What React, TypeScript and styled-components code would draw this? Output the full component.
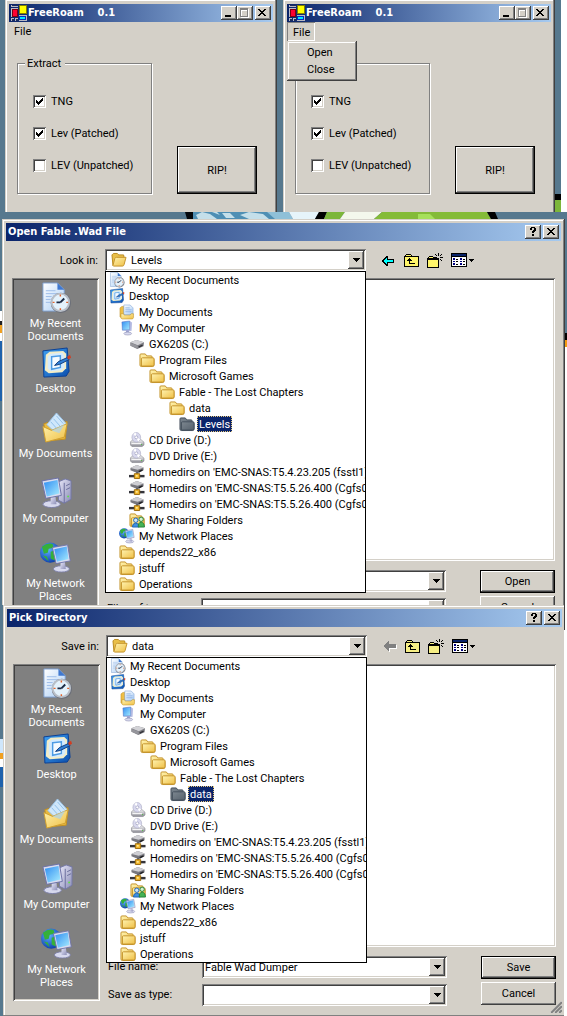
import React, { useId, useState } from "react";
import styled, { createGlobalStyle, css } from "styled-components";

const face = "#d4d0c8";
const shadow = "#808080";
const dark = "#404040";
const navy = "#0a246a";
const steel = "#56788e";

const Global = createGlobalStyle`
  *, *::before, *::after { box-sizing: border-box; }
  body {
    margin: 0;
    background: #ffffff;
    color: #000000;
    font: 11px/13px Roboto, "Liberation Sans", Arial, sans-serif;
  }
  button, input, select { font: inherit; color: inherit; margin: 0; }
  ul { list-style: none; margin: 0; padding: 0; }
`;

const raised = css`
  box-shadow: inset -1px -1px ${dark}, inset 1px 1px #ffffff, inset -2px -2px ${shadow};
`;

const sunken = css`
  box-shadow: inset 1px 1px ${shadow}, inset -1px -1px #ffffff, inset 2px 2px ${dark},
    inset -2px -2px ${face};
`;

/* ---------- icons ---------- */

type IconName =
  | "recent" | "desktop" | "documents" | "documentsBig" | "computer" | "computerBig"
  | "drive" | "folder" | "folderOpen" | "folderDark" | "disc" | "netdrive"
  | "sharing" | "network";

const HiddenDefs = styled.svg`
  display: block;
  width: 0;
  height: 0;
`;

const GradientDefs = () => (
  <HiddenDefs aria-hidden="true">
    <defs>
      <linearGradient id="gFolder" x1="0" y1="0" x2="1" y2="1">
        <stop offset="0" stopColor="#fff3b0" />
        <stop offset="1" stopColor="#efbf45" />
      </linearGradient>
      <linearGradient id="gDark" x1="0" y1="0" x2="1" y2="1">
        <stop offset="0" stopColor="#7d8790" />
        <stop offset="1" stopColor="#56616c" />
      </linearGradient>
      <linearGradient id="gPage" x1="0" y1="0" x2="1" y2="1">
        <stop offset="0" stopColor="#ffffff" />
        <stop offset="1" stopColor="#a9cdf5" />
      </linearGradient>
      <linearGradient id="gScreen" x1="0" y1="0" x2="1" y2="1">
        <stop offset="0" stopColor="#2f8df2" />
        <stop offset="1" stopColor="#a8ecff" />
      </linearGradient>
      <linearGradient id="gBlue" x1="0" y1="0" x2="1" y2="1">
        <stop offset="0" stopColor="#3fa0f0" />
        <stop offset="1" stopColor="#0b4fae" />
      </linearGradient>
      <linearGradient id="gMetal" x1="0" y1="0" x2="0" y2="1">
        <stop offset="0" stopColor="#f2f2f4" />
        <stop offset="1" stopColor="#8b8b94" />
      </linearGradient>
      <linearGradient id="gLilac" x1="0" y1="0" x2="1" y2="1">
        <stop offset="0" stopColor="#e6e6f8" />
        <stop offset="1" stopColor="#8d8fb8" />
      </linearGradient>
      <radialGradient id="gGlobe" cx="0.4" cy="0.35" r="0.7">
        <stop offset="0" stopColor="#5fb0ff" />
        <stop offset="1" stopColor="#0a3aa8" />
      </radialGradient>
    </defs>
  </HiddenDefs>
);

const clockPage = (
  <>
    <path d="M3 1h15l7 7v22H3z" fill="url(#gPage)" stroke="#7d9fd0" />
    <path d="M18 1v7h7z" fill="#3f78d0" />
    <path d="M6 9h10M6 12h12M6 15h6M6 18h5M6 21h5" stroke="#9dbce8" />
    <circle cx="21.500" cy="21.500" r="10.500" fill="#6a6e78" />
    <circle cx="21" cy="21" r="9" fill="#e4f2fc" stroke="#b9bfc8" strokeWidth="2" />
    <path d="M21 21l4-4M21 21h-4" stroke="#1b2a44" strokeWidth="2" />
    <path d="M21 13v2M21 27v2M13 21h2M27 21h2" stroke="#e2622a" strokeWidth="1.500" />
  </>
);

const desktopPad = (
  <>
    <path d="M3 4l25-3 2 24-3 5-23 1z" fill="url(#gBlue)" stroke="#0a3f94" />
    <path d="M6 8l4-3 14-1 3 3v15l-4 4-14 1-4-3z" fill="#f3edc8" />
    <path d="M8 10l3-3 12-1 2 3v12l-3 3-11 1-3-3z" fill="#d3ebff" />
    <path d="M12 10l9-1v12l-9 2z" fill="#f4faff" stroke="#4c9be4" strokeWidth="1.500" />
    <path d="M15 19l4-4 9-4 2 2-10 5z" fill="#2f7fd6" stroke="#123c7c" />
    <path d="M28 10l3-2 1 3-3 2z" fill="#d23c20" />
  </>
);

const monitor = (
  <>
    <ellipse cx="12" cy="28" rx="9" ry="3.500" fill="#d7d9ee" stroke="#7c7fa6" />
    <path d="M11 20l5 0 1 8h-6z" fill="url(#gLilac)" />
    <path d="M2 4l17-3 3 18-16 3z" fill="#d9dcef" stroke="#6d72a8" />
    <path d="M4 6l14-3 2 14-13 3z" fill="url(#gScreen)" />
  </>
);

const globe = (
  <>
    <circle cx="10.500" cy="11" r="10.500" fill="url(#gGlobe)" />
    <path
      d="M2 5q6-5 11-3l1 4-5 1-1 4-4 1zM11 10l6-2 2 4-4 7-4-2zM3 14l4 1 2 5z"
      fill="#35b03a"
    />
  </>
);

const discDrive = (
  <>
    <path d="M3 20l5-4h17l6 5v6l-4 3H6l-3-3z" fill="url(#gMetal)" stroke="#74747c" />
    <ellipse cx="15" cy="11" rx="9" ry="10" fill="#d9d9ee" stroke="#9c9cb8" />
    <path d="M15 11l-6-7 5-3zM15 11l8 4-4 5z" fill="#ffffff" />
    <circle cx="15" cy="11" r="3" fill="#ffffff" stroke="#8080a8" />
    <path d="M5 24h20" stroke="#ffffff" strokeWidth="2" />
    <circle cx="26" cy="26" r="1.500" fill="#54b848" />
  </>
);

const closedFolder = (fill: string, line: string) => (
  <>
    <path
      d="M2 6q0-2 2-2h9l3 4h9q2 0 2 2v4l4 1v12q0 3-3 3H5q-3 0-3-3z"
      fill={fill}
      stroke={line}
      strokeWidth="2"
    />
    <path d="M5 29V14q0-2 2-2h22q2 0 2 2v12q0 3-3 3z" fill={fill} stroke={line} strokeWidth="2" />
  </>
);

const iconArt: Record<IconName, React.ReactNode> = {
  recent: clockPage,
  desktop: desktopPad,
  documents: (
    <>
      <path d="M2 8l4-3h4v24H5l-3-3z" fill="#efbf45" stroke="#b98a20" />
      <path d="M10 2h13l6 6v14H10z" fill="url(#gPage)" stroke="#6d96d0" />
      <path d="M13 8h9M13 12h13M13 16h13" stroke="#7fa8e0" strokeWidth="1.500" />
      <path d="M4 20h5l2 3h12l2-3h5v8l-2 3H6l-2-2z" fill="url(#gFolder)" stroke="#b98a20" />
    </>
  ),
  documentsBig: (
    <>
      <path d="M4 12l7-2 4 2 13-2-2 18-20 2z" fill="#e9b93f" stroke="#c28f22" />
      <path d="M17 1l10 11-8 12L7 13z" fill="#cfe7fb" stroke="#9cc4e8" />
      <path d="M17 4l7 8M14 7l8 9M11 10l8 9" stroke="#8fc0ea" />
      <path d="M3 15l9 4 16-7-3 14-19 5z" fill="url(#gFolder)" stroke="#d0a030" />
      <path d="M12 19l13-6-5 9z" fill="#a9d2ee" opacity="0.7" />
    </>
  ),
  computer: (
    <>
      <path d="M6 4l16-2 5 3-1 17-5 1-14-2z" fill="#b9bfe4" />
      <path d="M6 4l16-2v18l-15 1z" fill="url(#gScreen)" stroke="#5d72c0" />
      <path d="M14 21h6l1 6h-6z" fill="#9da3d0" />
      <ellipse cx="18" cy="28" rx="8" ry="3" fill="#d7d9ee" stroke="#7c7fa6" />
    </>
  ),
  computerBig: (
    <>
      <path d="M19 5l7-3 6 2v19l-7 4-6-3z" fill="url(#gLilac)" stroke="#7579a8" />
      <path d="M25 6v21M27 9l4-2M27 13l4-2" stroke="#6a6e9c" />
      <circle cx="29" cy="20" r="1" fill="#5fe04a" />
      {monitor}
    </>
  ),
  drive: (
    <>
      <path d="M3 13l12-5 16 5-1 8-13 6-14-7z" fill="#7c7c82" />
      <path d="M3 13l12-5 16 5-13 6z" fill="#d2d2d6" />
      <path d="M3 14l15 6v6L3 20z" fill="#96969c" />
      <path d="M20 23l8-4" stroke="#34343a" strokeWidth="3" />
    </>
  ),
  folder: closedFolder("url(#gFolder)", "#c4932a"),
  folderOpen: (
    <>
      <path d="M2 6l3-3h8l3 3h10l1 5-3 17H4z" fill="#e9bf48" stroke="#b98a20" strokeWidth="2" />
      <path d="M4 28l4-15q1-2 3-2h20l-4 15q-1 3-3 3H5z" fill="url(#gFolder)" stroke="#c4932a" strokeWidth="2" />
    </>
  ),
  folderDark: closedFolder("url(#gDark)", "#444f5c"),
  disc: discDrive,
  netdrive: (
    <>
      <path d="M3 8l13-6 14 5v6l-12 6L3 13z" fill="#77777e" />
      <path d="M3 8l13-6 14 5-12 5z" fill="#cfcfd4" />
      <path d="M20 16l8-4" stroke="#222226" strokeWidth="3" />
      <path d="M15 16h3v6h-3z" fill="#55555c" />
      <path d="M0 25h32" stroke="#34343a" strokeWidth="5" />
      <path d="M11 20h11v10H11z" fill="#f0b429" stroke="#9c6c10" strokeWidth="2" />
      <path d="M14 23h4v3h-4z" fill="#fff0a8" />
    </>
  ),
  sharing: (
    <>
      {closedFolder("url(#gFolder)", "#c4932a")}
      <circle cx="14" cy="17" r="4.500" fill="#cfe6fb" stroke="#1f66b8" strokeWidth="2" />
      <path d="M7 31q0-8 7-8t7 8z" fill="#3f90e0" stroke="#1f66b8" strokeWidth="2" />
      <circle cx="25" cy="15" r="4.500" fill="#d2f0d0" stroke="#24833a" strokeWidth="2" />
      <path d="M19 31q0-10 6-10t7 10z" fill="#44b254" stroke="#24833a" strokeWidth="2" />
    </>
  ),
  network: (
    <>
      {globe}
      <g transform="translate(11 2) scale(0.92)">{monitor}</g>
    </>
  ),
};

const Icon = ({ name, size = 16 }: { name: IconName; size?: number }) => (
  <svg width={size} height={size} viewBox="0 0 33 33" aria-hidden="true">
    {iconArt[name]}
  </svg>
);

/* ---------- window chrome ---------- */

const TitleBar = styled.header`
  display: flex;
  align-items: center;
  height: 18px;
  padding: 0 2px;
  background: linear-gradient(90deg, ${navy}, #a6caf0);
`;

const TitleText = styled.h2`
  flex: 1;
  margin: 0;
  color: #ffffff;
  font: bold 11px/18px "DejaVu Sans Condensed", "DejaVu Sans", sans-serif;
  white-space: pre;
`;

const CaptionButton = styled.button<{ $spaced?: boolean }>`
  display: grid;
  place-items: center;
  width: 16px;
  height: 14px;
  margin-left: ${(p) => (p.$spaced ? "2px" : "0")};
  padding: 0 1px 1px 0;
  border: 0;
  background: ${face};
  ${raised}
`;

const glyphs = {
  min: <path d="M2 7h6v2H2z" />,
  max: (
    <>
      <path d="M2 1h8v9H2zM3 3v6h6V3z" fillRule="evenodd" fill="#ffffff" />
      <path d="M1 0h8v9H1zM2 2v6h6V2z" fillRule="evenodd" fill="#808080" />
    </>
  ),
  close: <path d="M1 1h2v1h1v1h2V2h1V1h2v1H8v1H7v1H6v1h1v1h1v1h1v1H7V7H6V6H4v1H3v1H1V7h1V6h1V5h1V4H3V3H2V2H1z" />,
  help: <path d="M2 1h1V0h4v1h1v3H7v1H6v1H4V4h1V3h1V1H4v2H2zM4 7h2v2H4z" />,
};

const Caption = ({ kind, label, spaced }: { kind: keyof typeof glyphs; label: string; spaced?: boolean }) => (
  <CaptionButton type="button" aria-label={label} $spaced={spaced}>
    <svg width="10" height="10" viewBox="0 0 10 10" shapeRendering="crispEdges">
      {glyphs[kind]}
    </svg>
  </CaptionButton>
);

/* ---------- FreeRoam windows ---------- */

const Screen = styled.main`
  background: ${steel};
`;

const AppRow = styled.div`
  display: flex;
  gap: 6px;
  padding: 0 12px 0 5px;
  background:
    linear-gradient(#000000 6px, #7cb63a 6px) right 6px bottom / 6px 18px no-repeat,
    linear-gradient(270deg, #ffffff 6px, ${steel} 6px);
`;

const AppWindow = styled.section`
  flex: 1;
  padding: 4px 4px 0;
  background: ${face};
  box-shadow: inset -1px 0 ${dark}, inset 1px 0 ${face}, inset -2px 0 ${shadow},
    inset 2px 1px #ffffff;
`;

const AppTitle = styled(TitleBar)`
  svg:first-child { flex: none; margin-right: 1px; }
`;

const AppLogo = () => (
  <svg width="16" height="16" viewBox="0 0 16 16" shapeRendering="crispEdges" aria-hidden="true">
    <path d="M0 0h7v2H0zM8 0h8v9H8zM0 3h7v9H0zM0 13h3v3H0zM4 13h3v3H4zM8 10h8v6H8z" fill="#b9b9c4" />
    <path d="M1 0h6v1H1zM1 14h2v2H1zM5 14h2v2H5z" fill="#1c2c5c" />
    <path d="M8 0h8v9H8z" fill="#808000" />
    <path d="M9 1h6v7H9z" fill="#ffff00" />
    <path d="M1 4h6v8H1z" fill="#7a0010" />
    <path d="M2 5h4v6H2z" fill="#ff0030" />
    <path d="M8 11h7v4H8z" fill="#0030c0" />
    <path d="M9 12h5v2H9z" fill="#00e8ff" />
  </svg>
);

const MenuBar = styled.nav`
  position: relative;
  display: flex;
  height: 19px;
`;

const MenuButton = styled.button<{ $open: boolean }>`
  width: 28px;
  height: 19px;
  padding: 0 0 0 5px;
  border: 0;
  background: none;
  line-height: 19px;
  text-align: left;
  ${(p) =>
    p.$open &&
    css`
      padding: 1px 0 0 6px;
      box-shadow: inset 1px 1px ${shadow}, inset -1px -1px #ffffff;
    `}
`;

const MenuPopup = styled.ul`
  position: absolute;
  top: 19px;
  left: 0;
  width: 70px;
  padding: 3px;
  background: ${face};
  box-shadow: inset -1px -1px ${dark}, inset 1px 1px ${face}, inset -2px -2px ${shadow},
    inset 2px 2px #ffffff;
`;

const MenuItem = styled.button`
  display: block;
  width: 100%;
  height: 17px;
  padding: 0 0 0 17px;
  border: 0;
  background: none;
  text-align: left;
`;

const AppBody = styled.div`
  display: flex;
  justify-content: space-between;
  align-items: flex-end;
  padding: 16px 16px 18px 8px;
`;

const Group = styled.fieldset`
  display: flex;
  flex-direction: column;
  gap: 16px;
  width: 135px;
  height: 137px;
  margin: 0;
  padding: 23px 0 0 15px;
  border: 1px solid ${shadow};
  box-shadow: 1px 1px #ffffff, inset 1px 1px #ffffff;
`;

const Legend = styled.legend`
  margin-left: -8px;
  padding: 0 4px 0 2px;
  background: ${face};
`;

const CheckLabel = styled.label`
  display: flex;
  align-items: center;
  gap: 5px;
  height: 16px;
  white-space: nowrap;
`;

const CheckBox = styled.input`
  appearance: none;
  width: 13px;
  height: 13px;
  border: 0;
  background: #ffffff;
  ${sunken}
  &:checked {
    background: url("data:image/svg+xml,%3Csvg xmlns='http://www.w3.org/2000/svg' width='13' height='13' shape-rendering='crispEdges'%3E%3Cpath d='M3 5v3l2 2 5-5V2L5 7z'/%3E%3C/svg%3E") #ffffff;
  }
`;

const RipButton = styled.button`
  width: 80px;
  height: 48px;
  border: 1px solid #000000;
  background: ${face};
  ${raised}
`;

const checks: [string, boolean][] = [
  ["TNG", true],
  ["Lev (Patched)", true],
  ["LEV (Unpatched)", false],
];

const FreeRoam = ({ menuOpen = false }: { menuOpen?: boolean }) => {
  const [open, setOpen] = useState(menuOpen);
  return (
    <AppWindow>
      <AppTitle>
        <AppLogo />
        <TitleText>{"FreeRoam    0.1"}</TitleText>
        <Caption kind="min" label="Minimize" />
        <Caption kind="max" label="Maximize" />
        <Caption kind="close" label="Close" spaced />
      </AppTitle>
      <MenuBar>
        <MenuButton type="button" $open={open} aria-expanded={open} onClick={() => setOpen(!open)}>
          File
        </MenuButton>
        {open && (
          <MenuPopup>
            <li><MenuItem type="button">Open</MenuItem></li>
            <li><MenuItem type="button">Close</MenuItem></li>
          </MenuPopup>
        )}
      </MenuBar>
      <AppBody>
        <Group>
          <Legend>Extract</Legend>
          {checks.map(([name, on]) => (
            <CheckLabel key={name}>
              <CheckBox type="checkbox" defaultChecked={on} />
              {name}
            </CheckLabel>
          ))}
        </Group>
        <RipButton type="button">RIP!</RipButton>
      </AppBody>
    </AppWindow>
  );
};

/* ---------- file dialogs ---------- */

const DialogLayer = styled.div<{ $front?: boolean }>`
  position: relative;
  ${(p) =>
    p.$front
      ? css`
          margin: -25px 3px 0 0;
          padding-left: 3px;
          background:
            linear-gradient(#cfe6fb 14px, #f0a020 14px 20px, #ffffff 20px 28px, #1f62ac 28px)
              left 134px / 3px 48px no-repeat,
            ${steel};
        `
      : css`
          padding: 0 2px;
          background:
            linear-gradient(#ffffff 10px, #202020 10px 14px, #f0a020 14px 22px, #ffffff 22px 30px, #1f62ac 30px)
              left 92px / 2px 90px no-repeat,
            linear-gradient(#000000 7px, #f29a10 7px 14px, #ffffff 14px)
              right 114px / 2px 298px no-repeat,
            ${steel};
        `}
`;

const DialogFrame = styled.section<{ $front?: boolean }>`
  padding: ${(p) => (p.$front ? "4px 2px 10px 4px" : "4px 4px 10px")};
  background: ${face};
  box-shadow: ${(p) =>
    p.$front
      ? `inset 0 -1px ${shadow}, inset 1px 1px ${face}, inset 2px 2px #ffffff`
      : `inset -1px -1px ${dark}, inset 1px 1px ${face}, inset -2px -2px ${shadow}, inset 2px 2px #ffffff`};
`;

const DialogBody = styled.div`
  display: grid;
  grid-template-columns: 87px minmax(0, 1fr);
  column-gap: 6px;
  row-gap: 7px;
  padding: 8px 6px 0;
`;

const LookLabel = styled.label`
  padding: 1px 1px 0 0;
  line-height: 21px;
  text-align: right;
`;

const TopRow = styled.div`
  display: flex;
  align-items: center;
  gap: 16px;
`;

const ComboWrap = styled.div`
  position: relative;
  flex: 0 1 261px;
  min-width: 0;
`;

const Combo = styled.div`
  display: flex;
  align-items: center;
  height: 22px;
  padding: 2px 2px 2px 6px;
  background: #ffffff;
  ${sunken}
`;

const plainField = css`
  appearance: none;
  flex: 1;
  min-width: 0;
  height: 18px;
  padding: 0;
  border: 0;
  outline: 0;
  background: none;
`;

const ComboSelect = styled.select<{ $inset?: boolean }>`
  ${plainField}
  padding-left: ${(p) => (p.$inset ? "4px" : "0")};
`;

const ComboInput = styled.input`
  ${plainField}
`;

const FieldCombo = styled(Combo)`
  padding-left: 3px;
`;

const DropButton = styled.button`
  display: grid;
  place-items: center;
  width: 16px;
  height: 18px;
  padding: 0;
  border: 0;
  background: ${face};
  ${raised}
`;

const Drop = () => (
  <DropButton type="button" aria-label="Show list">
    <svg width="7" height="4" viewBox="0 0 7 4" shapeRendering="crispEdges">
      <path d="M0 0h7v1H6v1H5v1H4v1H3V3H2V2H1V1H0z" />
    </svg>
  </DropButton>
);

const Tree = styled.ul`
  position: absolute;
  z-index: 1;
  top: 22px;
  left: 0;
  right: 0;
  overflow: hidden;
  border: 1px solid #000000;
  background: #ffffff;
`;

const TreeRow = styled.li<{ $level: number }>`
  display: flex;
  align-items: center;
  gap: 2px;
  height: 16px;
  padding-left: ${(p) => 3 + p.$level * 10}px;
  white-space: nowrap;
  svg { flex: none; }
`;

const TreeText = styled.span<{ $active: boolean }>`
  padding: 1px 2px 0;
  line-height: 15px;
  ${(p) =>
    p.$active &&
    css`
      background: ${navy};
      color: #ffffff;
      outline: 1px dotted #e8c97a;
      outline-offset: -1px;
    `}
`;

const Tools = styled.div`
  display: flex;
  align-items: center;
  gap: 8px;
`;

const ToolButton = styled.button`
  display: flex;
  padding: 0;
  border: 0;
  background: none;
`;

const Places = styled.nav`
  display: flex;
  flex-direction: column;
  height: 337px;
  padding: 4px 2px 0;
  background: ${shadow};
  ${sunken}
`;

const Place = styled.button`
  display: flex;
  flex-direction: column;
  align-items: center;
  gap: 3px;
  height: 65px;
  padding: 0;
  border: 0;
  background: none;
  color: #ffffff;
`;

const FileList = styled.div`
  height: 283px;
  background: #ffffff;
  ${sunken}
`;

const Main = styled.div`
  display: flex;
  flex-direction: column;
  gap: 9px;
`;

const BottomRow = styled.div`
  display: flex;
  gap: 34px;
`;

const Fields = styled.div`
  flex: 1;
  display: grid;
  grid-template-columns: 96px minmax(0, 1fr);
  grid-auto-rows: 22px;
  row-gap: 6px;
`;

const FieldLabel = styled.label`
  padding-left: 2px;
  line-height: 22px;
`;

const Actions = styled.div`
  display: flex;
  flex-direction: column;
  gap: 3px;
`;

const ActionButton = styled.button<{ $main?: boolean }>`
  width: 75px;
  height: 23px;
  padding: 0;
  border: ${(p) => (p.$main ? "1px solid #000000" : "0")};
  background: ${face};
  ${raised}
`;

const Grip = styled.svg`
  position: absolute;
  right: 2px;
  bottom: 3px;
`;

const Toolbar = ({ backEnabled }: { backEnabled: boolean }) => {
  const paper = backEnabled ? "#fff56a" : "#f6ee84";
  return (
    <Tools>
      <ToolButton type="button" aria-label="Back" disabled={!backEnabled}>
        <svg width="14" height="13" viewBox="0 0 14 13" shapeRendering="crispEdges">
          {backEnabled ? (
            <>
              <path d="M0 6h1V5h1V4h1V3h1V2h2v3h6v4H6v3H4v-1H3v-1H2V9H1V8H0z" />
              <path d="M2 6h1V5h1V4h1v2h6v2H5v2H4V9H3V8H2z" fill="#00ffff" />
            </>
          ) : (
            <>
              <path d="M1 7l5-5v3h8v4H7v4z" fill="#ffffff" />
              <path d="M0 6l6-5v3h7v4H6v4z" fill="#808080" />
            </>
          )}
        </svg>
      </ToolButton>
      <ToolButton type="button" aria-label="Up one level">
        <svg width="15" height="13" viewBox="0 0 15 13" shapeRendering="crispEdges">
          <path d="M0 2h1V1h1V0h5v1h1v1h7v11H0z" />
          <path d="M1 2h1V1h5v1h1v1h6v9H1z" fill={paper} />
          <path d="M1 2h7v1H1z" />
          <path d="M5 4h1v1h1v1h1v1H6v2h5v1H5V7H3V6h1V5h1z" />
        </svg>
      </ToolButton>
      <ToolButton type="button" aria-label="Create new folder">
        <svg width="16" height="15" viewBox="0 0 16 15" shapeRendering="crispEdges">
          <path d="M0 5h1V4h1V3h4v1h1v1h5v10H0z" />
          <path d="M1 7h10v7H1zM2 4h4v1H2z" fill={paper} />
          <path d="M11 0h1v3h-1zM11 6h1v3h-1zM7 4h3v1H7zM13 4h3v1h-3zM8 1h1v1H8zM9 2h1v1H9zM14 1h1v1h-1zM13 2h1v1h-1zM13 6h1v1h-1zM14 7h1v1h-1z" />
        </svg>
      </ToolButton>
      <ToolButton type="button" aria-label="View menu">
        <svg width="23" height="14" viewBox="0 0 23 14" shapeRendering="crispEdges">
          <path d="M0 0h16v14H0z" />
          <path d="M1 1h14v2H1z" fill="#0a246a" />
          <path d="M1 4h14v9H1z" fill="#ffffff" />
          <path d="M2 5h2v2H2zM2 8h2v1H2zM2 10h2v2H2zM9 5h2v2H9zM9 8h2v1H9zM9 10h2v2H9z" fill="#000080" />
          <path d="M5 6h2v1H5zM5 8h2v1H5zM5 11h2v1H5zM12 6h2v1h-2zM12 8h2v1h-2zM12 11h2v1h-2zM18 6h5v1h-1v1h-1v1h-1V8h-1V7h-1z" />
        </svg>
      </ToolButton>
    </Tools>
  );
};

const places: [IconName, string[]][] = [
  ["recent", ["My Recent", "Documents"]],
  ["desktop", ["Desktop"]],
  ["documentsBig", ["My Documents"]],
  ["computerBig", ["My Computer"]],
  ["network", ["My Network", "Places"]],
];

type Node = [number, IconName, string];

const head: Node[] = [
  [0, "recent", "My Recent Documents"],
  [0, "desktop", "Desktop"],
  [1, "documents", "My Documents"],
  [1, "computer", "My Computer"],
  [2, "drive", "GX620S (C:)"],
  [3, "folder", "Program Files"],
  [4, "folder", "Microsoft Games"],
  [5, "folder", "Fable - The Lost Chapters"],
];

const tail: Node[] = [
  [2, "disc", "CD Drive (D:)"],
  [2, "disc", "DVD Drive (E:)"],
  [2, "netdrive", "homedirs on 'EMC-SNAS:T5.4.23.205 (fsstl1)'"],
  [2, "netdrive", "Homedirs on 'EMC-SNAS:T5.5.26.400 (Cgfs00"],
  [2, "netdrive", "Homedirs on 'EMC-SNAS:T5.5.26.400 (Cgfs00"],
  [2, "sharing", "My Sharing Folders"],
  [1, "network", "My Network Places"],
  [1, "folder", "depends22_x86"],
  [1, "folder", "jstuff"],
  [1, "folder", "Operations"],
];

type DialogProps = {
  title: string;
  lookLabel: string;
  path: string[];
  fileName: string;
  typeLabel: string;
  action: string;
  backEnabled: boolean;
  front?: boolean;
};

const FileDialog = ({ title, lookLabel, path, fileName, typeLabel, action, backEnabled, front }: DialogProps) => {
  const id = useId();
  const current = path[path.length - 1];
  const nodes: Node[] = [
    ...head,
    ...path.map((name, i): Node => [6 + i, name === current ? "folderDark" : "folder", name]),
    ...tail,
  ];
  return (
    <DialogLayer $front={front}>
      <DialogFrame $front={front}>
        <TitleBar>
          <TitleText>{title}</TitleText>
          <Caption kind="help" label="Help" />
          <Caption kind="close" label="Close" spaced />
        </TitleBar>
        <DialogBody>
          <LookLabel htmlFor={`${id}-look`}>{lookLabel}</LookLabel>
          <TopRow>
            <ComboWrap>
              <Combo>
                <Icon name="folderOpen" />
                <ComboSelect $inset id={`${id}-look`} defaultValue={current}>
                  <option>{current}</option>
                </ComboSelect>
                <Drop />
              </Combo>
              <Tree>
                {nodes.map(([level, icon, name], i) => (
                  <TreeRow key={i} $level={level}>
                    <Icon name={icon} />
                    <TreeText $active={name === current}>{name}</TreeText>
                  </TreeRow>
                ))}
              </Tree>
            </ComboWrap>
            <Toolbar backEnabled={backEnabled} />
          </TopRow>
          <Places>
            {places.map(([icon, lines]) => (
              <Place type="button" key={lines[0]}>
                <Icon name={icon} size={32} />
                <span>
                  {lines[0]}
                  {lines[1] && <br />}
                  {lines[1]}
                </span>
              </Place>
            ))}
          </Places>
          <Main>
            <FileList />
            <BottomRow>
              <Fields>
                <FieldLabel htmlFor={`${id}-name`}>File name:</FieldLabel>
                <FieldCombo>
                  <ComboInput id={`${id}-name`} defaultValue={fileName} />
                  <Drop />
                </FieldCombo>
                <FieldLabel htmlFor={`${id}-type`}>{typeLabel}</FieldLabel>
                <FieldCombo>
                  <ComboSelect id={`${id}-type`} />
                  <Drop />
                </FieldCombo>
              </Fields>
              <Actions>
                <ActionButton type="button" $main>{action}</ActionButton>
                <ActionButton type="button">Cancel</ActionButton>
              </Actions>
            </BottomRow>
          </Main>
        </DialogBody>
        {front && (
          <Grip width="12" height="12" viewBox="0 0 12 12" aria-hidden="true">
            <path d="M0 12L12 0M4 12l8-8M8 12l4-4" stroke="#ffffff" />
            <path d="M1 12L12 1M5 12l7-7M9 12l3-3" stroke="#808080" strokeWidth="2" />
          </Grip>
        )}
      </DialogFrame>
    </DialogLayer>
  );
};

/* ---------- desktop ---------- */

const WallpaperStrip = styled.svg`
  display: block;
  width: 100%;
  height: 7px;
`;

const Wallpaper = () => (
  <WallpaperStrip viewBox="0 0 567 7" preserveAspectRatio="none" aria-hidden="true">
    <path d="M0 0h567v7H0z" fill="#56788e" />
    <path d="M185 0h8v7h-6z" fill="#05080c" />
    <path d="M193 0h74l10 7h-84z" fill="#4f8fb4" />
    <path d="M196 3l6-3 8 2 7 5h-19zM222 1h8l5 5h-9zM240 3l9-3 14 2 6 5h-20zM212 0h5l3 3z" fill="#c4dfea" />
    <path d="M267 0h22l4 7h-18z" fill="#8fc0d8" />
    <path d="M289 0h30l-4 7h-22z" fill="#e6f4fa" />
    <path d="M319 0h8l-3 7h-9z" fill="#000000" />
    <path d="M327 0h18l-5 7h-16z" fill="#7cb63a" />
    <path d="M345 0h37l-8 7h-34z" fill="#f3f7ec" />
    <path d="M382 0h105l4 7H374z" fill="#84bb38" />
    <path d="M418 2h12l5 5h-17z" fill="#a6e05a" />
    <path d="M487 0h8l3 7h-7z" fill="#000000" />
  </WallpaperStrip>
);

export default function App() {
  return (
    <>
      <Global />
      <GradientDefs />
      <Screen>
        <AppRow>
          <FreeRoam />
          <FreeRoam menuOpen />
        </AppRow>
        <Wallpaper />
        <FileDialog
          title="Open Fable .Wad File"
          lookLabel="Look in:"
          path={["data", "Levels"]}
          fileName=""
          typeLabel="Files of type:"
          action="Open"
          backEnabled
        />
      </Screen>
      <FileDialog
        title="Pick Directory"
        lookLabel="Save in:"
        path={["data"]}
        fileName="Fable Wad Dumper"
        typeLabel="Save as type:"
        action="Save"
        backEnabled={false}
        front
      />
    </>
  );
}
